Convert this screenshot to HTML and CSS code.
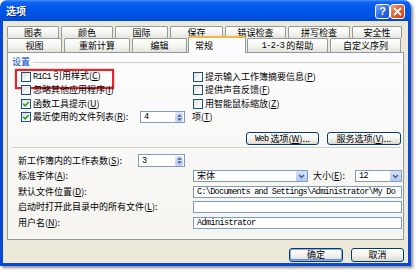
FILE: index.html
```html
<!DOCTYPE html>
<html lang="zh-CN">
<head>
<meta charset="utf-8">
<title>选项</title>
<link rel="stylesheet" href="styles.css">
</head>
<body>
<div class="window">
  <div class="titlebar">
    <span class="title">选项</span>
    <div class="caption-btns">
      <span class="cbtn help">?</span>
      <span class="cbtn close"><svg width="9" height="9" viewBox="0 0 9 9"><path d="M1.5 1.5L7.5 7.5M7.5 1.5L1.5 7.5" stroke="#fff" stroke-width="1.8" stroke-linecap="round"/></svg></span>
    </div>
  </div>
  <div class="frame">
    <div class="client">
      <div class="tabs">
        <div class="tabrow back">
          <span class="tab w52">图表</span>
          <span class="tab w52">颜色</span>
          <span class="tab w53">国际</span>
          <span class="tab w53">保存</span>
          <span class="tab w61">错误检查</span>
          <span class="tab w62">拼写检查</span>
          <span class="tab w50">安全性</span>
        </div>
        <div class="tabrow front">
          <span class="tab w55">视图</span>
          <span class="tab w66">重新计算</span>
          <span class="tab w55">编辑</span>
          <span class="tab sel">常规</span>
          <span class="tab w81"><span class="m">1-2-3</span>&nbsp;的帮助</span>
          <span class="tab w71">自定义序列</span>
        </div>
      </div>
      <div class="panel">
        <div class="group-head"><span class="group-label">设置</span><span class="group-line"></span></div>
        <div class="checks">
          <div class="chk marked"><span class="box"></span><span><span class="m">R1C1</span> 引用样式(<u>C</u>)</span></div>
          <div class="chk"><span class="box"></span><span>提示输入工作簿摘要信息(<u>P</u>)</span></div>
          <div class="chk"><span class="box"></span><span>忽略其他应用程序(<u>I</u>)</span></div>
          <div class="chk"><span class="box"></span><span>提供声音反馈(<u>F</u>)</span></div>
          <div class="chk"><span class="box"><svg width="8" height="8" viewBox="0 0 8 8"><path d="M1.2 3.8L3.2 5.8L6.8 2" fill="none" stroke="#21A121" stroke-width="1.6"/></svg></span><span>函数工具提示(<u>U</u>)</span></div>
          <div class="chk"><span class="box"></span><span>用智能鼠标缩放(<u>Z</u>)</span></div>
          <div class="chk recent">
            <span class="box"><svg width="8" height="8" viewBox="0 0 8 8"><path d="M1.2 3.8L3.2 5.8L6.8 2" fill="none" stroke="#21A121" stroke-width="1.6"/></svg></span>
            <span class="recent-label">最近使用的文件列表(<u>R</u>):</span>
            <span class="field spin w45"><span class="m val">4</span><span class="spin-btns"><svg width="7" height="9" viewBox="0 0 7 9"><path d="M1 3.8L3.5 1.3L6 3.8Z M1 5.2L3.5 7.7L6 5.2Z" fill="#4D6185"/></svg></span></span>
            <span class="unit">项(<u>T</u>)</span>
          </div>
        </div>
        <div class="btnrow">
          <span class="btn w73"><span class="m">Web</span>&nbsp;选项(<u>W</u>)...</span>
          <span class="btn w74">服务选项(<u>V</u>)...</span>
        </div>
        <div class="sep"></div>
        <div class="form">
          <div class="row-span">
            <span class="form-label">新工作簿内的工作表数(<u>S</u>):</span>
            <span class="field spin w47 tall"><span class="m val">3</span><span class="spin-btns"><svg width="7" height="9" viewBox="0 0 7 9"><path d="M1 3.8L3.5 1.3L6 3.8Z M1 5.2L3.5 7.7L6 5.2Z" fill="#4D6185"/></svg></span></span>
          </div>
          <span class="lbl">标准字体(<u>A</u>):</span>
          <div class="font-row">
            <span class="field select w115"><span class="val">宋体</span><span class="drop"><svg width="7" height="5" viewBox="0 0 7 5"><path d="M1 1L3.5 3.5L6 1" fill="none" stroke="#4D6185" stroke-width="1.5"/></svg></span></span>
            <span class="size-label">大小(<u>E</u>):</span>
            <span class="field select w47"><span class="m val">12</span><span class="drop"><svg width="7" height="5" viewBox="0 0 7 5"><path d="M1 1L3.5 3.5L6 1" fill="none" stroke="#4D6185" stroke-width="1.5"/></svg></span></span>
          </div>
          <span class="lbl">默认文件位置(<u>D</u>):</span>
          <span class="field"><span class="m val path">C:\Documents and Settings\Administrator\My Do</span></span>
          <span class="lbl">启动时打开此目录中的所有文件(<u>L</u>):</span>
          <span class="field"></span>
          <span class="lbl">用户名(<u>N</u>):</span>
          <span class="field"><span class="m val">Administrator</span></span>
        </div>
      </div>
      <div class="footer">
        <span class="btn default w54">确定</span>
        <span class="btn w53">取消</span>
      </div>
    </div>
  </div>
</div>
</body>
</html>
```

FILE: styles.css
```css
* { box-sizing: border-box; }
html, body { margin: 0; }
body {
  background: #fff;
  font-family: "Noto Sans CJK SC", "Liberation Sans", sans-serif;
  font-size: 9px;
  line-height: 12px;
  color: #000;
  width: 416px;
  height: 272px;
  overflow: hidden;
}
u { text-decoration: underline; text-underline-offset: 1px; }
.m {
  font-family: "Liberation Mono", "DejaVu Sans Mono", monospace;
  font-size: 8.5px;
  letter-spacing: -0.6px;
}
.path { letter-spacing: -0.7px; }

.window {
  width: 411px;
  height: 266px;
  display: flex;
  flex-direction: column;
  border-radius: 7px 7px 0 0;
  box-shadow: 2px 2px 3px rgba(0, 0, 0, 0.45);
}
.titlebar {
  height: 21px;
  flex: none;
  border-radius: 7px 7px 0 0;
  background: linear-gradient(#4A96FA 0, #1466F0 2px, #0058EE 35%, #0053E1 70%, #0048D4 100%);
  display: flex;
  align-items: center;
  justify-content: space-between;
  padding: 0 6px 0 6px;
}
.title {
  color: #fff;
  font-weight: bold;
  font-size: 10px;
  text-shadow: 1px 1px 0 #0A2A8A;
}
.caption-btns { display: flex; gap: 0; margin-top: 1px; }
.cbtn {
  width: 15px;
  height: 15px;
  border: 1px solid #fff;
  border-radius: 3px;
  display: flex;
  align-items: center;
  justify-content: center;
}
.help {
  background: linear-gradient(135deg, #7AA6FA, #2A66E6 55%, #1A4FD0);
  color: #fff;
  font-family: "Liberation Sans", sans-serif;
  font-weight: bold;
  font-size: 11px;
}
.close {
  background: linear-gradient(135deg, #F0A080, #E2602E 50%, #C8411B);
}

.frame {
  flex: 1;
  background: #0A46D8;
  padding: 0 3px 3px;
}
.client {
  height: 100%;
  background: #ECE9D8;
  padding: 5px 4px 0 4px;
  display: flex;
  flex-direction: column;
}

/* tabs */
.tabs { height: 26px; flex: none; }
.tabrow { display: flex; gap: 2px; }
.back { height: 12px; }
.front { height: 14px; }
.tab {
  display: flex;
  align-items: center;
  justify-content: center;
  border: 1px solid #919B9C;
  border-bottom: none;
  border-radius: 2px 2px 0 0;
  background: linear-gradient(#FFFFFF, #F4F4F0 55%, #E4E3DC);
  white-space: nowrap;
  line-height: 10px;
}
.tab.sel {
  width: 58px;
  height: 17px;
  margin: -2px -1px -1px -1px;
  border-top: 2px solid #F6B73E;
  background: #FCFCFE;
  position: relative;
  z-index: 2;
  justify-content: flex-start;
  padding-left: 6px;
}
.w45 { width: 45px; }
.w47 { width: 47px; }
.w50 { width: 50px; }
.w52 { width: 52px; }
.w53 { width: 53px; }
.w54 { width: 54px; }
.w55 { width: 55px; }
.w61 { width: 61px; }
.w62 { width: 62px; }
.w66 { width: 66px; }
.w71 { width: 71px; }
.w73 { width: 73px; }
.w74 { width: 74px; }
.w81 { width: 81px; }
.w115 { width: 115px; }

/* panel */
.panel {
  height: 188px;
  flex: none;
  border: 1px solid #919B9C;
  background: linear-gradient(#FCFCFE, #F5F4EF);
  padding-top: 4px;
  position: relative;
  z-index: 1;
}
.group-head {
  display: flex;
  align-items: center;
  height: 10px;
  margin: 0 2px 0 4px;
  gap: 3px;
}
.group-label { color: #0046D5; }
.group-line { flex: 1; height: 1px; background: #D0D0BF; }

.checks {
  margin-top: 3px;
  padding-left: 13px;
  display: grid;
  grid-template-columns: 172px 1fr;
  grid-auto-rows: 13.5px;
}
.chk {
  display: flex;
  align-items: center;
  gap: 2px;
  white-space: nowrap;
  position: relative;
}
.box {
  width: 10px;
  height: 10px;
  flex: none;
  border: 1px solid #1C5180;
  background: linear-gradient(135deg, #DCDCD7, #FFFFFF 80%);
  display: flex;
  align-items: center;
  justify-content: center;
}
.marked::after {
  content: "";
  position: absolute;
  left: -6px;
  top: -1.5px;
  width: 95px;
  height: 16px;
  border: 2px solid #E0262A;
  box-shadow: 0 0 1.5px rgba(200, 0, 0, 0.6);
}
.recent { grid-column: 1 / -1; }
.recent-label { width: 105px; }
.unit { margin-left: 5px; }

.field {
  height: 12px;
  border: 1px solid #7F9DB9;
  background: #fff;
  display: flex;
  align-items: center;
  padding-left: 3px;
  overflow: hidden;
  white-space: nowrap;
}
.field.tall { height: 13px; }
.spin .val, .select .val { flex: 1; }
.spin-btns {
  width: 8px;
  height: 10px;
  margin-right: 1px;
  border-radius: 2px;
  background: linear-gradient(#D8E3FC, #BACCF5);
  display: flex;
  align-items: center;
  justify-content: center;
}
.drop {
  width: 11px;
  height: 10px;
  border-radius: 1px;
  background: linear-gradient(#D4E0FC, #B6C9F5);
  display: flex;
  align-items: center;
  justify-content: center;
}

.btnrow {
  display: flex;
  justify-content: flex-end;
  gap: 8px;
  margin-top: 8px;
  padding-right: 2px;
}
.btn {
  height: 13px;
  border: 1px solid #003C74;
  border-radius: 3px;
  background: linear-gradient(#FFFFFF, #F2F1EC 55%, #DCD8CE);
  display: flex;
  align-items: center;
  justify-content: center;
  white-space: nowrap;
  line-height: 10px;
}
.sep {
  height: 2px;
  margin: 2px 2px 0 4px;
  border-top: 1px solid #D0D0BF;
  border-bottom: 1px solid #FFFFFF;
}

.form {
  margin-top: 4px;
  padding: 0 1px 0 10px;
  display: grid;
  grid-template-columns: 175px 1fr;
  grid-auto-rows: 15.5px;
  align-items: center;
}
.row-span {
  grid-column: 1 / -1;
  display: flex;
  align-items: center;
}
.form-label { width: 120px; white-space: nowrap; }
.lbl { white-space: nowrap; }
.font-row { display: flex; align-items: center; }
.size-label { margin-left: 5px; flex: 1; white-space: nowrap; }

.footer {
  display: flex;
  justify-content: flex-end;
  gap: 8px;
  margin-top: 8px;
}
.footer .btn { height: 14px; }
.btn.default {
  box-shadow: inset 0 0 0 1px #8DACEB, inset 0 -1px 0 1px #6F8EE0;
}
```
